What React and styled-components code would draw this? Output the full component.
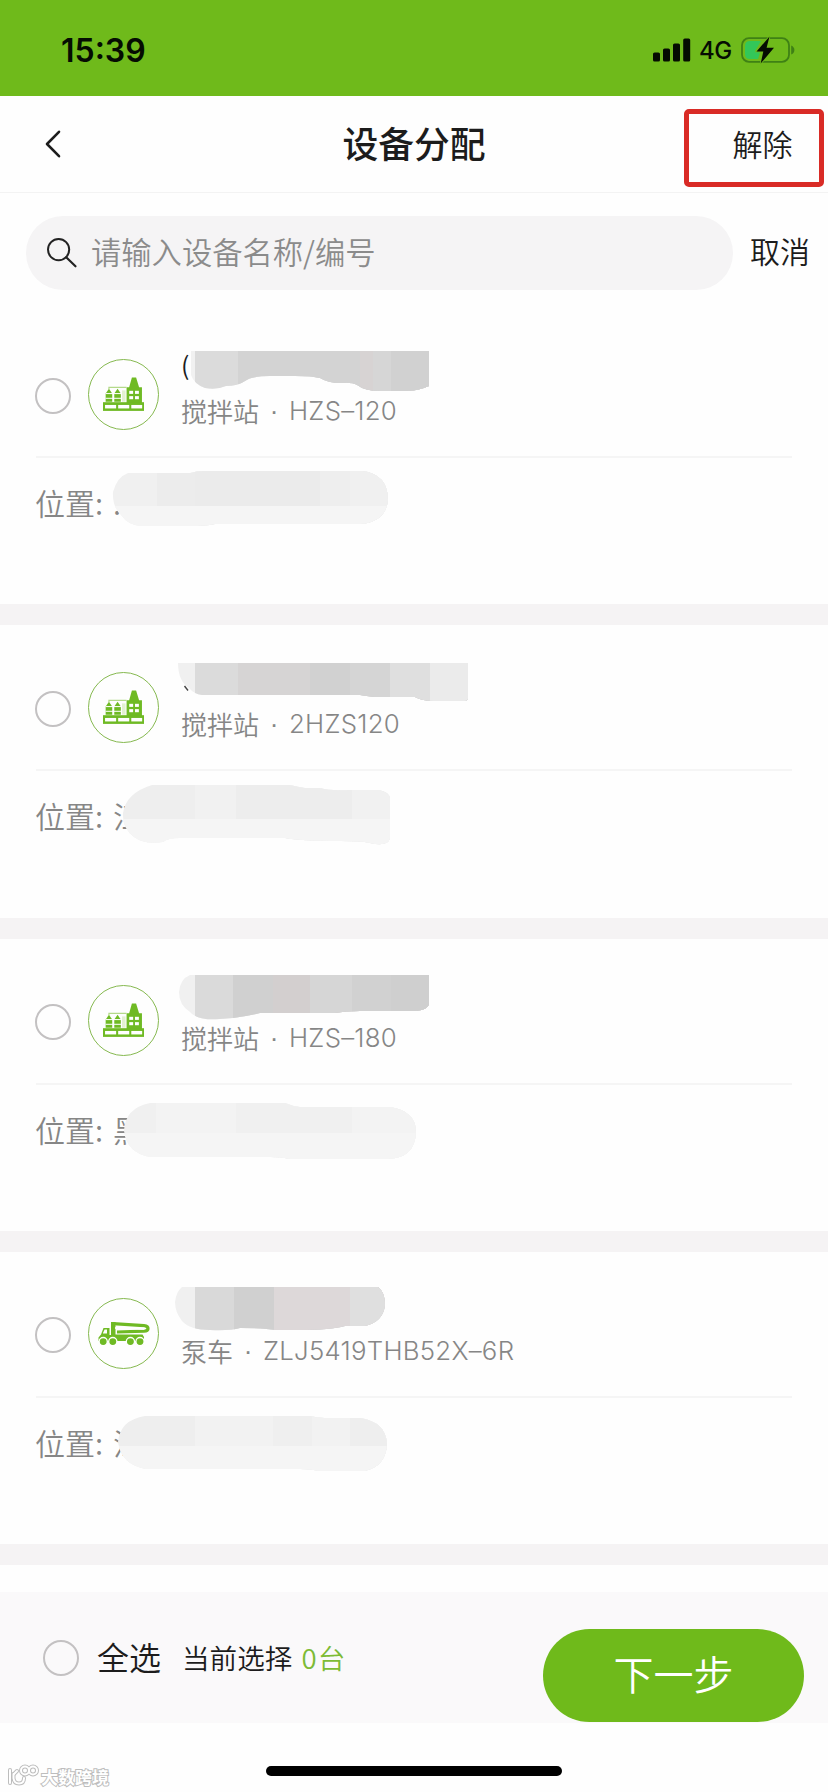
import { useState } from "react";
import styled, { createGlobalStyle } from "styled-components";

const GlobalStyle = createGlobalStyle`
  * {
    box-sizing: border-box;
  }
  body {
    margin: 0;
    background: #fefefe;
    font-family: "Noto Sans CJK SC", sans-serif;
    color: #1c1c1c;
  }
  button {
    border: none;
    background: none;
    padding: 0;
    font-family: inherit;
    color: inherit;
  }
`;

const devices = [
  {
    id: 1,
    icon: "plant",
    type: "搅拌站",
    model: "HZS–120",
    name: "(",
    location: ".",
    nameMask: {
      path: "M191 39H429V74Q418 79 405 79H380Q365 79 357 73Q352 70 340 71Q328 71 320 66Q312 64 295 64H270Q252 64 245 69Q238 74 226 74Q217 78 205 76Q194 72 191 63Z",
      blocks: [
        [188, "#f1f1f1"],
        [195, "#dbdbdb"],
        [238, "#d3d3d3"],
        [315, "#d3d3d3"],
        [360, "#d7d3d3"],
        [373, "#d6d6d6"],
        [391, "#d1d1d1"],
      ],
    },
    locationMask: {
      path: "M128 161H190Q196 159 205 159H362Q388 162 388 188Q386 210 360 212H215Q205 214 190 214H140Q127 212 122 204Q112 195 113 180Q117 165 128 161Z",
      blocks: [
        [110, "#f0f0f0"],
        [157, "#ececec"],
        [195, "#ebebeb"],
        [320, "#eeeeee"],
        [350, "#f0f0f0"],
      ],
      fadeFrom: 194,
    },
  },
  {
    id: 2,
    icon: "plant",
    type: "搅拌站",
    model: "2HZS120",
    name: "",
    location: "江",
    nameMask: {
      path: "M178 38H468V73Q468 76 464 76H435Q422 76 415 72H375Q366 71 360 70H202Q194 69 189 63Q178 56 178 38Z",
      blocks: [
        [178, "#f0f0f0"],
        [195, "#dbdbdb"],
        [238, "#d6d4d4"],
        [310, "#d1d1d1"],
        [350, "#d5d5d5"],
        [390, "#dfdfdf"],
        [430, "#ebebeb"],
      ],
      speck: "M184.5 61L188 65.5",
    },
    locationMask: {
      path: "M152 160H290Q298 162 305 163H320Q330 166 350 165H378Q390 167 390 174V213Q388 222 370 218Q365 216 340 216Q300 216 285 213H180Q168 213 163 217Q145 220 134 212Q122 203 123 188Q126 168 152 160Z",
      blocks: [
        [120, "#eeeeee"],
        [195, "#f1f1f1"],
        [236, "#ededed"],
        [352, "#f1f1f1"],
      ],
      fadeFrom: 194,
    },
  },
  {
    id: 3,
    icon: "plant",
    type: "搅拌站",
    model: "HZS–180",
    name: "",
    location: "黑",
    nameMask: {
      path: "M190 36H429V65Q427 72 412 72H360Q345 72 335 74H260Q240 79 220 80Q198 82 190 73Q179 66 179 53Q180 40 190 36Z",
      blocks: [
        [178, "#f0f0f0"],
        [195, "#dadada"],
        [233, "#d0d0d0"],
        [273, "#d3cfcf"],
        [310, "#d6d6d6"],
        [352, "#d1d1d1"],
        [391, "#cfcfcf"],
      ],
    },
    locationMask: {
      path: "M150 164H285Q292 167 300 168H390Q416 172 416 193Q415 219 388 220H290Q282 218 270 218H150Q127 214 124 192Q125 169 150 164Z",
      blocks: [
        [120, "#f0f0f0"],
        [156, "#f3f3f3"],
        [236, "#f0f0f0"],
        [352, "#f3f3f3"],
      ],
      fadeFrom: 194,
    },
  },
  {
    id: 4,
    icon: "truck",
    type: "泵车",
    model: "ZLJ5419THB52X–6R",
    name: "",
    location: "江",
    nameMask: {
      path: "M182 35H378Q385 40 385 53Q383 70 365 74H345Q330 78 300 78H275Q265 76 240 76Q230 79 210 78Q190 78 182 69Q175 60 175 50Q176 40 182 35Z",
      blocks: [
        [174, "#f0f0f0"],
        [195, "#d9d9d9"],
        [234, "#d0d0d0"],
        [274, "#ddd8d9"],
        [350, "#dfdfdf"],
      ],
    },
    locationMask: {
      path: "M145 164H310Q318 166 325 166H360Q386 170 387 192Q386 214 365 219H320Q310 217 300 217H145Q121 212 118 190Q120 168 145 164Z",
      blocks: [
        [116, "#eeeeee"],
        [195, "#f2f2f2"],
        [273, "#efefef"],
        [312, "#f2f2f2"],
        [350, "#eeeeee"],
      ],
      fadeFrom: 194,
    },
  },
];

const SignalIcon = () => (
  <svg width="38" height="24" viewBox="0 0 38 24" fill="#050c02">
    <rect x="0" y="14.5" width="7" height="9" rx="1.6" />
    <rect x="10" y="10.5" width="7" height="13" rx="1.6" />
    <rect x="20" y="5.5" width="7" height="18" rx="1.6" />
    <rect x="30.2" y="0.5" width="7" height="23" rx="1.6" />
  </svg>
);

const BatteryIcon = () => (
  <svg width="54" height="28" viewBox="0 0 54 28">
    <rect
      x="1"
      y="2.2"
      width="47"
      height="23.6"
      rx="7"
      fill="none"
      stroke="#3f8115"
      strokeWidth="1.8"
    />
    <path d="M50.2 9.5Q53.4 11 53.4 14T50.2 18.5Z" fill="#3f8115" />
    <path d="M9 5H20L14 15L19 16.5L17 23H9Q4 23 4 18V10Q4 5 9 5Z" fill="#33c759" />
    <path
      d="M28.5 0.5L15.5 15.5H22.3L19.7 27.5L33 11.8H25.6Z"
      fill="#050c02"
      stroke="#6fba1b"
      strokeWidth="1.6"
      paintOrder="stroke"
    />
  </svg>
);

const BackIcon = () => (
  <svg width="18" height="30" viewBox="0 0 18 30" fill="none">
    <path
      d="M16 2.8L4 15L16 27.2"
      stroke="#1c1c1c"
      strokeWidth="2.6"
      strokeLinecap="round"
      strokeLinejoin="round"
    />
  </svg>
);

const SearchIcon = () => (
  <svg width="32" height="32" viewBox="0 0 32 32" fill="none">
    <circle cx="12.6" cy="12.6" r="10.6" stroke="#222" strokeWidth="2" />
    <path d="M20.2 20.2L29.5 29.3" stroke="#222" strokeWidth="2.2" strokeLinecap="round" />
  </svg>
);

const PlantIcon = () => (
  <svg width="41" height="35" viewBox="0 0 40 34">
    <g fill="#6fba24">
      <path d="M2.6 16L5.8 11.5L9 16V24H2.6Z" />
      <path d="M11 16L14.2 11.5L17.4 16V24H11Z" />
      <path d="M25.5 10L28.2 0.5H32.3L35.2 10H38V26H23V10Z" />
      <rect x="0" y="24.5" width="40" height="8.5" />
    </g>
    <path d="M5.8 12V10H23" stroke="#b4d98a" strokeWidth="1.2" fill="none" />
    <path d="M18.5 13H22V24H18.5Z" fill="#e3f1d2" />
    <g fill="#fff">
      <rect x="2.5" y="15.6" width="15.5" height="1" />
      <rect x="2.5" y="20.2" width="15.5" height="1" />
      <rect x="25.6" y="13.4" width="3.8" height="3" />
      <rect x="31.2" y="13.4" width="3.8" height="3" />
      <rect x="25.6" y="18.6" width="3.8" height="3" />
      <rect x="31.2" y="18.6" width="3.8" height="3" />
      <rect x="2" y="27.2" width="10.8" height="3.4" />
      <rect x="14.8" y="27.2" width="10.8" height="3.4" />
      <rect x="27.6" y="27.2" width="10.6" height="3.4" />
    </g>
  </svg>
);

const TruckIcon = () => (
  <svg width="52" height="26" viewBox="0 0 52 26">
    <path
      d="M0.5 20V16.5L3 13.5L5.5 7H11.5V14H13V1H17.5V13.5H44.5L46 16V20Z"
      fill="#6fba24"
    />
    <path d="M5 12L6.6 8.6H9V12.4H5Z" fill="#fff" />
    <path
      d="M15 2.6L46 4.6Q50.2 5 50 7.8Q49.8 10 46 10.2L19 11"
      stroke="#6fba24"
      strokeWidth="3.2"
      strokeLinejoin="round"
      fill="none"
    />
    <path d="M18 7L46 7.6" stroke="#fff" strokeWidth="2.2" strokeLinecap="round" />
    {[5.2, 14.8, 32.4, 42].map((cx) => (
      <circle key={cx} cx={cx} cy="20.6" r="4.1" fill="#6fba24" stroke="#fff" strokeWidth="1.3" />
    ))}
  </svg>
);

const WatermarkLogo = () => (
  <svg width="32" height="24" viewBox="0 0 32 24" fill="none">
    <g stroke="#bdbdbd" strokeWidth="4" strokeLinecap="round">
      <path d="M3 6V19M6.5 10V14Q7 19.5 12 19.5Q17 19.5 17 14" />
      <path d="M7 10L10 7" />
      <circle cx="18" cy="6.5" r="4" />
      <circle cx="26" cy="6.5" r="4" />
    </g>
    <g stroke="#fff" strokeWidth="2" strokeLinecap="round">
      <path d="M3 6V19M6.5 10V14Q7 19.5 12 19.5Q17 19.5 17 14" />
      <path d="M7 10L10 7" />
      <circle cx="18" cy="6.5" r="4" />
      <circle cx="26" cy="6.5" r="4" />
    </g>
  </svg>
);

// hides private text: a brushed shape filled with mosaic columns
const Mask = ({ id, path, blocks, fadeFrom, speck }) => (
  <>
    <clipPath id={id}>
      <path d={path} />
    </clipPath>
    <g clipPath={`url(#${id})`}>
      {blocks.map(([x, color]) => (
        <rect key={x} x={x} y="30" width={480 - x} height="200" fill={color} />
      ))}
      {fadeFrom && <rect x="100" y={fadeFrom} width="380" height="40" fill="#f5f5f5" />}
    </g>
    {speck && <path d={speck} stroke="#444" strokeWidth="1.4" />}
  </>
);

const DeviceCard = ({ device, checked, onToggle }) => (
  <Card>
    <DeviceRow>
      <Radio $checked={checked} onClick={onToggle} />
      <Avatar>{device.icon === "plant" ? <PlantIcon /> : <TruckIcon />}</Avatar>
      <Info>
        <DeviceName>{device.name}</DeviceName>
        <DeviceModel>
          <span>{device.type}</span>
          <i>·</i>
          <b>{device.model}</b>
        </DeviceModel>
      </Info>
    </DeviceRow>
    <Location>
      <span>位置:</span>
      <span>{device.location}</span>
    </Location>
    <MaskLayer viewBox="0 0 480 292">
      <Mask id={`name-${device.id}`} {...device.nameMask} />
      <Mask id={`location-${device.id}`} {...device.locationMask} />
    </MaskLayer>
  </Card>
);

const App = () => {
  const [selected, setSelected] = useState([]);
  const allSelected = selected.length === devices.length;

  const toggleHandler = (id) => {
    setSelected(
      selected.includes(id) ? selected.filter((item) => item !== id) : [...selected, id]
    );
  };
  const toggleAllHandler = () => {
    setSelected(allSelected ? [] : devices.map((device) => device.id));
  };

  return (
    <Page>
      <GlobalStyle />
      <StatusBar>
        <Time>15:39</Time>
        <StatusIcons>
          <SignalIcon />
          <span>4G</span>
          <BatteryIcon />
        </StatusIcons>
      </StatusBar>
      <Header>
        <BackButton>
          <BackIcon />
        </BackButton>
        <h1>设备分配</h1>
        <ReleaseButton>解除</ReleaseButton>
      </Header>
      <SearchRow>
        <SearchBox>
          <SearchIcon />
          <span>请输入设备名称/编号</span>
        </SearchBox>
        <CancelButton>取消</CancelButton>
      </SearchRow>
      <List>
        {devices.map((device) => (
          <DeviceCard
            key={device.id}
            device={device}
            checked={selected.includes(device.id)}
            onToggle={() => toggleHandler(device.id)}
          />
        ))}
      </List>
      <Footer>
        <Radio $checked={allSelected} onClick={toggleAllHandler} />
        <SelectAll>全选</SelectAll>
        <Summary>
          当前选择 <em>{selected.length}台</em>
        </Summary>
        <NextButton>下一步</NextButton>
      </Footer>
      <BottomArea>
        <Watermark>
          <WatermarkLogo />
          <span>大数跨境</span>
        </Watermark>
        <HomeIndicator />
      </BottomArea>
    </Page>
  );
};

const Page = styled.div`
  display: flex;
  flex-direction: column;
  width: 828px;
  height: 1792px;
  overflow: hidden;
`;
const StatusBar = styled.div`
  display: flex;
  justify-content: space-between;
  align-items: center;
  height: 96px;
  padding: 4px 33px 0 61px;
  background: #6fba1b;
  color: #050c02;
  font-family: Inter, sans-serif;
`;
const Time = styled.div`
  font-size: 32px;
  font-weight: 600;
`;
const StatusIcons = styled.div`
  display: flex;
  align-items: center;
  span {
    margin: 0 9px 0 8px;
    font-size: 24px;
    font-weight: 450;
    letter-spacing: -0.3px;
  }
`;
const Header = styled.header`
  display: grid;
  grid-template-columns: 1fr auto 1fr;
  align-items: center;
  height: 97px;
  padding: 0 4px 0 43px;
  border-bottom: 1px solid #f3f3f3;
  h1 {
    margin: 0;
    padding: 0 39px 5px 0;
    font-size: 35.8px;
    line-height: 48px;
    font-weight: 500;
  }
`;
const BackButton = styled.button`
  display: flex;
`;
const ReleaseButton = styled.button`
  justify-self: end;
  width: 140px;
  height: 78px;
  margin-top: 8px;
  padding: 0 0 11px 17px;
  border: 5px solid #d92b26;
  border-radius: 5px;
  font-size: 30px;
  line-height: 40px;
  font-weight: 350;
`;
const SearchRow = styled.div`
  display: flex;
  align-items: center;
  height: 119px;
  padding: 0 0 0 26px;
`;
const SearchBox = styled.div`
  display: flex;
  align-items: center;
  gap: 13px;
  width: 707px;
  height: 74px;
  padding-left: 20px;
  border-radius: 37px;
  background: #f5f4f5;
  color: #8b8b8b;
  font-size: 30.3px;
  font-weight: 350;
  span {
    padding-bottom: 4px;
  }
`;
const CancelButton = styled.button`
  margin-left: 17px;
  padding-bottom: 5px;
  font-size: 30px;
  font-weight: 350;
`;
const List = styled.div`
  height: 1280px;
  overflow: hidden;
`;
const Card = styled.section`
  position: relative;
  height: 313.33px;
  padding: 0 36px;
  border-bottom: 21.33px solid #f5f3f4;
`;
const DeviceRow = styled.div`
  display: flex;
  align-items: center;
  height: 146px;
  padding-top: 20px;
  border-bottom: 2px solid #f5f5f5;
  > button {
    margin-top: 3px;
    margin-left: -1px;
  }
`;
const Radio = styled.button`
  flex: none;
  width: 36px;
  height: 36px;
  border: 2px solid #c3c1c2;
  border-radius: 50%;
  background: ${(props) => (props.$checked ? "#6fba1b" : "transparent")};
`;
const Avatar = styled.div`
  display: flex;
  justify-content: center;
  align-items: center;
  width: 71px;
  height: 71px;
  margin-left: 17px;
  border: 1px solid #86b950;
  border-radius: 50%;
`;
const Info = styled.div`
  margin-left: 22px;
`;
const DeviceName = styled.div`
  height: 40px;
  font-size: 25px;
  line-height: 21px;
`;
const DeviceModel = styled.div`
  display: flex;
  align-items: center;
  height: 40px;
  padding-bottom: 6px;
  color: #868686;
  font-size: 26px;
  line-height: 34px;
  font-weight: 350;
  i {
    width: 30px;
    text-align: center;
    font-family: "Liberation Sans", sans-serif;
    font-style: normal;
  }
  b {
    font-family: Inter, sans-serif;
    font-size: 25.8px;
    font-weight: 300;
    letter-spacing: 0.25px;
  }
`;
const Location = styled.div`
  display: flex;
  gap: 10px;
  margin-left: -1px;
  padding-top: 22px;
  color: #868686;
  font-size: 30px;
  line-height: 44px;
  font-weight: 350;
`;
const MaskLayer = styled.svg`
  position: absolute;
  top: 0;
  left: 0;
  width: 480px;
  height: 292px;
  pointer-events: none;
`;
const Footer = styled.footer`
  display: flex;
  align-items: center;
  height: 131px;
  padding: 0 24px 0 43px;
  background: #faf9fa;
`;
const SelectAll = styled.span`
  margin-left: 18px;
  padding-bottom: 4px;
  font-size: 32px;
  font-weight: 350;
`;
const Summary = styled.span`
  margin-left: 21px;
  padding-bottom: 2px;
  font-size: 27.6px;
  font-weight: 350;
  em {
    margin-left: 3px;
    color: #7dbb35;
    font-style: normal;
    letter-spacing: 1px;
  }
`;
const NextButton = styled.button`
  width: 261px;
  height: 93px;
  margin: 36px 0 0 auto;
  padding-bottom: 5px;
  border-radius: 47px;
  background: #6fba1b;
  color: #fff;
  font-size: 40px;
  font-weight: 350;
`;
const BottomArea = styled.div`
  display: grid;
  grid-template-columns: 1fr auto 1fr;
  height: 69px;
`;
const Watermark = styled.div`
  display: flex;
  align-items: center;
  gap: 2px;
  height: 24px;
  margin: 41px 0 0 7px;
  span {
    color: #fff;
    font-size: 17px;
    font-weight: 700;
    -webkit-text-stroke: 2px #bdbdbd;
    paint-order: stroke fill;
  }
`;
const HomeIndicator = styled.div`
  width: 296px;
  height: 10px;
  margin-top: 43px;
  border-radius: 5px;
  background: #000;
`;

export default App;
